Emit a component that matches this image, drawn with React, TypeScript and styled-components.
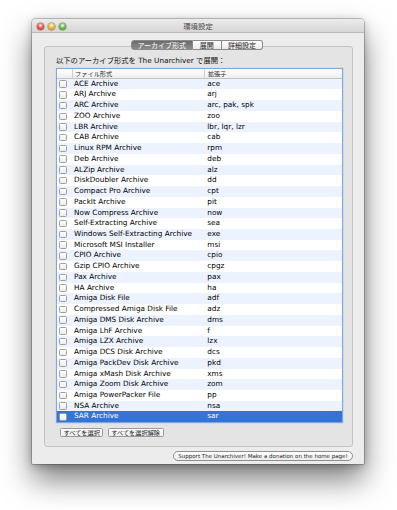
import React from 'react';
import styled, { createGlobalStyle } from 'styled-components';

const GlobalStyle = createGlobalStyle`
  html, body {
    margin: 0;
    background: #ffffff;
  }
  body {
    font-family: "DejaVu Sans", "Noto Sans CJK JP", sans-serif;
    color: #000;
  }
`;

const Page = styled.div`
  padding: 19px 0 0 32px;
  height: 510px;
  box-sizing: border-box;
`;

const Window = styled.div`
  width: 332px;
  height: 445px;
  background: #ececec;
  border-radius: 4px 4px 1px 1px;
  box-shadow: 0 0 0 1px rgba(0, 0, 0, 0.2), 0 16px 30px rgba(0, 0, 0, 0.5), 0 2px 8px rgba(0, 0, 0, 0.25);
  display: flex;
  flex-direction: column;
  overflow: hidden;
`;

const TitleBar = styled.div`
  height: 14px;
  flex-shrink: 0;
  display: grid;
  grid-template-columns: 1fr auto 1fr;
  align-items: center;
  background: linear-gradient(#ebebeb, #d6d6d6);
  border-bottom: 1px solid #b9b9b9;
  box-sizing: border-box;
`;

const Lights = styled.div`
  display: flex;
  gap: 4px;
  padding-left: 4.5px;
`;

const Light = styled.span<{ $color: string; $edge: string }>`
  width: 7px;
  height: 7px;
  border-radius: 50%;
  background: radial-gradient(circle at 50% 35%, #ffffff 0, ${(p) => p.$color} 45%, ${(p) => p.$edge} 100%);
  box-shadow: 0 0 0 0.5px rgba(0, 0, 0, 0.45);
`;

const Title = styled.div`
  font-family: "Noto Sans CJK JP", sans-serif;
  font-size: 7.4px;
  color: #4a4a4a;
  line-height: 14px;
`;

const Body = styled.div`
  flex: 1;
  display: flex;
  flex-direction: column;
  padding: 7px 11px 3px 12px;
  min-height: 0;
`;

const TabBar = styled.div`
  display: flex;
  justify-content: center;
  margin-bottom: -4px;
  position: relative;
  z-index: 1;
  padding-right: 3px;
`;

const Tab = styled.div<{ $active?: boolean; $w: number }>`
  width: ${(p) => p.$w}px;
  height: 10px;
  box-sizing: border-box;
  display: flex;
  align-items: center;
  justify-content: center;
  font-family: "Noto Sans CJK JP", sans-serif;
  font-size: 7px;
  color: ${(p) => (p.$active ? '#ffffff' : '#262626')};
  background: ${(p) =>
    p.$active ? 'linear-gradient(#6c6c6c, #8c8c8c)' : 'linear-gradient(#ffffff, #e9e9e9)'};
  border: 1px solid #8a8a8a;
  border-left-width: 0;
  &:first-child {
    border-left-width: 1px;
    border-radius: 3px 0 0 3px;
  }
  &:last-child {
    border-radius: 0 3px 3px 0;
  }
`;

const Box = styled.div`
  flex: 1;
  display: flex;
  flex-direction: column;
  border: 1px solid #c3c3c3;
  border-radius: 3px;
  background: #e4e4e4;
  padding: 9px 9px 10px 11px;
  min-height: 0;
`;

const Label = styled.div`
  font-size: 7.3px;
  line-height: 9px;
  color: #111;
  margin-bottom: 3px;
`;

const Table = styled.div`
  border: 1px solid #7fa6df;
  box-shadow: 0 0 1.5px 0.5px #a9c6ef;
  background: #ffffff;
`;

const Cols = styled.div`
  display: grid;
  grid-template-columns: 14.7px 132.8px 1fr;
  align-items: center;
`;

const Header = styled(Cols)`
  height: 9.7px;
  box-sizing: border-box;
  background: linear-gradient(#ffffff, #eeeeee);
  border-bottom: 1px solid #c2c2c2;
`;

const HeadCell = styled.div`
  height: 100%;
  display: flex;
  align-items: center;
  padding-left: 2.4px;
  font-family: "Noto Sans CJK JP", sans-serif;
  font-size: 6.2px;
  color: #2a2a2a;
  border-left: 1px solid #cfcfcf;
  &:first-child {
    border-left: none;
  }
`;

const Row = styled(Cols)<{ $stripe: boolean; $selected: boolean }>`
  height: 10.74px;
  background: ${(p) => (p.$selected ? '#3673d6' : p.$stripe ? '#edf3fe' : '#ffffff')};
  color: ${(p) => (p.$selected ? '#ffffff' : '#000000')};
`;

const Cell = styled.div`
  font-size: 7.3px;
  line-height: 10.74px;
  white-space: nowrap;
  overflow: hidden;
  padding-left: 2.4px;
`;

const ExtCell = styled(Cell)`
  padding-left: 2.8px;
`;

const Check = styled.span`
  display: block;
  width: 7.5px;
  height: 7.5px;
  margin-left: 2.3px;
  box-sizing: border-box;
  border: 1px solid #9e9e9e;
  border-radius: 1.5px;
  background: linear-gradient(#ffffff, #ececec);
`;

const ButtonRow = styled.div`
  display: flex;
  gap: 4.5px;
  padding-left: 4px;
  margin-top: 4.5px;
`;

const SmallButton = styled.div`
  height: 9.5px;
  box-sizing: border-box;
  padding: 0 2.5px;
  display: flex;
  align-items: center;
  font-family: "Noto Sans CJK JP", sans-serif;
  font-size: 6.2px;
  color: #1e1e1e;
  background: linear-gradient(#ffffff, #ededed);
  border: 1px solid #9a9a9a;
  border-radius: 1.5px;
`;

const Footer = styled.div`
  display: flex;
  justify-content: flex-end;
  margin-top: 4px;
`;

const PillButton = styled.div`
  width: 180px;
  height: 10px;
  box-sizing: border-box;
  display: flex;
  align-items: center;
  justify-content: center;
  font-size: 5.5px;
  color: #1e1e1e;
  background: linear-gradient(#ffffff, #ececec);
  border: 1px solid #8f8f8f;
  border-radius: 5px;
  white-space: nowrap;
`;

const formats: [string, string][] = [
  ['ACE Archive', 'ace'],
  ['ARJ Archive', 'arj'],
  ['ARC Archive', 'arc, pak, spk'],
  ['ZOO Archive', 'zoo'],
  ['LBR Archive', 'lbr, lqr, lzr'],
  ['CAB Archive', 'cab'],
  ['Linux RPM Archive', 'rpm'],
  ['Deb Archive', 'deb'],
  ['ALZip Archive', 'alz'],
  ['DiskDoubler Archive', 'dd'],
  ['Compact Pro Archive', 'cpt'],
  ['PackIt Archive', 'pit'],
  ['Now Compress Archive', 'now'],
  ['Self-Extracting Archive', 'sea'],
  ['Windows Self-Extracting Archive', 'exe'],
  ['Microsoft MSI Installer', 'msi'],
  ['CPIO Archive', 'cpio'],
  ['Gzip CPIO Archive', 'cpgz'],
  ['Pax Archive', 'pax'],
  ['HA Archive', 'ha'],
  ['Amiga Disk File', 'adf'],
  ['Compressed Amiga Disk File', 'adz'],
  ['Amiga DMS Disk Archive', 'dms'],
  ['Amiga LhF Archive', 'f'],
  ['Amiga LZX Archive', 'lzx'],
  ['Amiga DCS Disk Archive', 'dcs'],
  ['Amiga PackDev Disk Archive', 'pkd'],
  ['Amiga xMash Disk Archive', 'xms'],
  ['Amiga Zoom Disk Archive', 'zom'],
  ['Amiga PowerPacker File', 'pp'],
  ['NSA Archive', 'nsa'],
  ['SAR Archive', 'sar'],
];

const App: React.FC = () => {
  const selected = formats.length - 1;

  return (
    <>
      <GlobalStyle />
      <Page>
        <Window>
          <TitleBar>
            <Lights>
              <Light $color="#f0544c" $edge="#b8261f" />
              <Light $color="#f5b73a" $edge="#c17c10" />
              <Light $color="#6cc04a" $edge="#2f8a1c" />
            </Lights>
            <Title>環境設定</Title>
            <div />
          </TitleBar>
          <Body>
            <TabBar>
              <Tab $active $w={62}>アーカイブ形式</Tab>
              <Tab $w={29}>展開</Tab>
              <Tab $w={41.5}>詳細設定</Tab>
            </TabBar>
            <Box>
              <Label>以下のアーカイブ形式を The Unarchiver で展開：</Label>
              <Table>
                <Header>
                  <HeadCell />
                  <HeadCell>ファイル形式</HeadCell>
                  <HeadCell>拡張子</HeadCell>
                </Header>
                {formats.map(([name, ext], index) => (
                  <Row key={name} $stripe={index % 2 === 0} $selected={index === selected}>
                    <Check />
                    <Cell>{name}</Cell>
                    <ExtCell>{ext}</ExtCell>
                  </Row>
                ))}
              </Table>
              <ButtonRow>
                <SmallButton>すべてを選択</SmallButton>
                <SmallButton>すべてを選択解除</SmallButton>
              </ButtonRow>
            </Box>
            <Footer>
              <PillButton>Support The Unarchiver! Make a donation on the home page!</PillButton>
            </Footer>
          </Body>
        </Window>
      </Page>
    </>
  );
};

export default App;
